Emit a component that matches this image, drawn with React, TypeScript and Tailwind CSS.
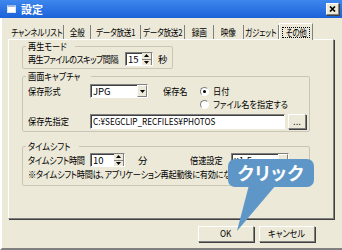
import type { ReactNode } from "react";

const sunken =
  "border border-t-[#808080] border-l-[#808080] border-b-white border-r-white shadow-[inset_1px_1px_0_#404040]";
const raised =
  "border border-t-white border-l-white border-b-[#808080] border-r-[#808080] shadow-[1px_1px_0_#404040]";

const TABS = [
  { label: "チャンネルリスト", w: "w-[54px]" },
  { label: "全般", w: "w-[27px]" },
  { label: "データ放送1", w: "w-[50px]" },
  { label: "データ放送2", w: "w-[44px]" },
  { label: "録画", w: "w-[29px]" },
  { label: "映像", w: "w-[30px]" },
  { label: "ガジェット", w: "w-[35px]" },
];

// MS UI Gothic is much narrower than Noto, squeeze the labels a bit
function T({ children, center }: { children: ReactNode; center?: boolean }) {
  return (
    <span
      className={`inline-block whitespace-nowrap scale-x-[0.86] ${center ? "origin-center" : "origin-left"}`}
    >
      {children}
    </span>
  );
}

function Arrow({ down }: { down?: boolean }) {
  return (
    <svg viewBox="0 0 5 3" className="h-[3px] w-[5px]" aria-hidden>
      <path d={down ? "M0 0h5L2.5 3z" : "M0 3h5L2.5 0z"} fill="#000" />
    </svg>
  );
}

function Spin({ value, w }: { value: string; w: string }) {
  return (
    <div className={`flex h-[14px] bg-white ${w} ${sunken}`}>
      <span className="flex-1 pl-[2px] leading-[12px]">{value}</span>
      <div className="flex w-[10px] flex-col">
        <span className="flex flex-1 items-center justify-center border-b border-r border-b-[#808080] border-r-[#808080] bg-[#ece9d8]">
          <Arrow />
        </span>
        <span className="flex flex-1 items-center justify-center border-r border-r-[#808080] bg-[#ece9d8]">
          <Arrow down />
        </span>
      </div>
    </div>
  );
}

function Combo({ value }: { value: string }) {
  return (
    <div className={`flex h-[14px] w-[58px] bg-white ${sunken}`}>
      <span className="flex-1 pl-[2px] leading-[12px]">{value}</span>
      <span className="flex w-[10px] items-center justify-center border border-t-white border-l-white border-b-[#808080] border-r-[#808080] bg-[#ece9d8]">
        <Arrow down />
      </span>
    </div>
  );
}

function Radio({ on, children }: { on?: boolean; children: ReactNode }) {
  return (
    <div className="flex items-center gap-[4px]">
      <span className="flex h-[9px] w-[9px] items-center justify-center rounded-full border border-[#808080] border-b-white border-r-white bg-white">
        {on && <span className="h-[3px] w-[3px] rounded-full bg-black" />}
      </span>
      <T>{children}</T>
    </div>
  );
}

function Group({ title, w, className = "", children }: { title: string; w: string; className?: string; children: ReactNode }) {
  return (
    <fieldset className={`rounded-[2px] border border-[#c9c6b6] ${w} ${className}`}>
      <legend className="ml-[3px] px-[2px] leading-[12px]">
        <T>{title}</T>
      </legend>
      {children}
    </fieldset>
  );
}

export default function App() {
  return (
    <div className="relative h-[250px] w-[342px] overflow-hidden bg-[#ece9d8] font-['Noto_Sans_CJK_JP',sans-serif] text-[9.5px] text-black [font-feature-settings:'palt']">
      {/* title bar */}
      <div className="flex h-[18px] items-center bg-gradient-to-b from-[#3d87ee] to-[#1b62d8] pl-[7px] pr-[3px]">
        <span className="h-[8px] w-[9px] border border-t-2 border-[#d8e4f8] border-t-[#9bb8e8] bg-white" />
        <span className="ml-[5px] text-[11px] font-bold leading-none text-white">設定</span>
        <span className={`ml-auto flex h-[12px] w-[13px] items-center justify-center bg-[#ece9d8] ${raised}`}>
          <svg viewBox="0 0 7 6" className="h-[6px] w-[7px]" aria-hidden>
            <path d="M1 0.5l5 5M6 0.5l-5 5" stroke="#000" strokeWidth={1.6} />
          </svg>
        </span>
      </div>

      <div className="flex h-[232px] flex-col border-b-2 border-l-2 border-b-[#808080] border-l-white pl-[6px]">
        {/* tabs */}
        <div className="mt-[5px] flex h-[16px] items-end pl-[2px] tracking-[-0.3px]">
          {TABS.map((t) => (
            <span
              key={t.label}
              className={`flex h-[14px] items-center justify-center border-r border-r-[#808080] ${t.w}`}
            >
              <span className="inline-block origin-center scale-x-[0.8] whitespace-nowrap">{t.label}</span>
            </span>
          ))}
          <span className="relative z-10 -mb-px flex h-[17px] w-[34px] items-center justify-center border border-b-0 border-t-white border-l-white border-r-[#808080] bg-[#ece9d8]">
            <span className="flex h-[11px] w-[28px] items-center justify-center border border-dotted border-black">
              <span className="inline-block origin-center scale-x-[0.8] whitespace-nowrap">その他</span>
            </span>
          </span>
        </div>

        {/* panel */}
        <div className="h-[180px] w-[326px] border border-t-white border-l-white border-b-[#808080] border-r-[#808080] shadow-[1px_1px_0_#404040] pl-[13px]">
          <Group title="再生モード" w="w-[151px]">
            <div className="flex h-[14px] items-center pl-[5px]">
              <span className="w-[97px] tracking-[-0.7px]">
                <T>再生ファイルのスキップ間隔</T>
              </span>
              <Spin value="15" w="w-[28px]" />
              <span className="ml-[5px]">秒</span>
            </div>
            <div className="h-[2px]" />
          </Group>

          <Group title="画面キャプチャ" w="w-[288px]" className="mt-[1px]">
            <div className="flex items-start pl-[5px] pt-[2px]">
              <span className="flex h-[14px] w-[62px] items-center">
                <T>保存形式</T>
              </span>
              <Combo value="JPG" />
              <span className="ml-[15px] flex h-[14px] w-[37px] items-center">
                <T>保存名</T>
              </span>
              <div className="flex flex-col">
                <div className="flex h-[14px] items-center">
                  <Radio on>日付</Radio>
                </div>
                <div className="flex h-[13px] items-center">
                  <Radio>ファイル名を指定する</Radio>
                </div>
              </div>
            </div>
            <div className="mt-[3px] flex h-[15px] items-center pl-[5px]">
              <span className="w-[62px]">
                <T>保存先指定</T>
              </span>
              <span className={`h-[15px] w-[195px] bg-white pl-[2px] leading-[13px] ${sunken}`}>
                <T>C:¥SEGCLIP_RECFILES¥PHOTOS</T>
              </span>
              <span className={`ml-[3px] flex h-[15px] w-[18px] items-center justify-center bg-[#ece9d8] leading-none ${raised}`}>...</span>
            </div>
            <div className="h-[2px]" />
          </Group>

          <Group title="タイムシフト" w="w-[288px]" className="mt-[8px]">
            <div className="mt-[1px] flex h-[14px] items-center pl-[5px]">
              <span className="w-[62px] tracking-[-0.3px]">
                <T>タイムシフト時間</T>
              </span>
              <Spin value="10" w="w-[35px]" />
              <span className="ml-[13px] w-[52px]">分</span>
              <span className="w-[41px]">
                <T>倍速設定</T>
              </span>
              <Combo value="x1.5" />
            </div>
            <div className="mt-[1px] h-[12px] pl-[5px] leading-[12px] tracking-[-0.3px]">
              <T>※タイムシフト時間は、アプリケーション再起動後に有効になります。</T>
            </div>
            <div className="h-[5px]" />
          </Group>
        </div>

        {/* buttons */}
        <div className="mt-[7px] flex justify-end gap-[5px] pr-[27px]">
          <button className={`h-[16px] w-[56px] bg-[#ece9d8] leading-none ${raised}`}>
            <T center>OK</T>
          </button>
          <button className={`h-[16px] w-[56px] bg-[#ece9d8] leading-none ${raised}`}>
            <T center>キャンセル</T>
          </button>
        </div>
      </div>

      {/* callout */}
      <svg className="pointer-events-none absolute left-0 top-0 h-[250px] w-[342px]" viewBox="0 0 342 250" aria-hidden>
        <rect x="228" y="159" width="86" height="28" rx="7" fill="#5e97c7" />
        <path d="M249 185 L276 185 L237 231 Z" fill="#5e97c7" />
        <text
          x="271"
          y="180"
          textAnchor="middle"
          fill="#fff"
          fontSize="18"
          fontWeight="700"
          fontFamily="'Noto Sans CJK JP', sans-serif"
          letterSpacing="1"
        >
          クリック
        </text>
      </svg>
    </div>
  );
}
